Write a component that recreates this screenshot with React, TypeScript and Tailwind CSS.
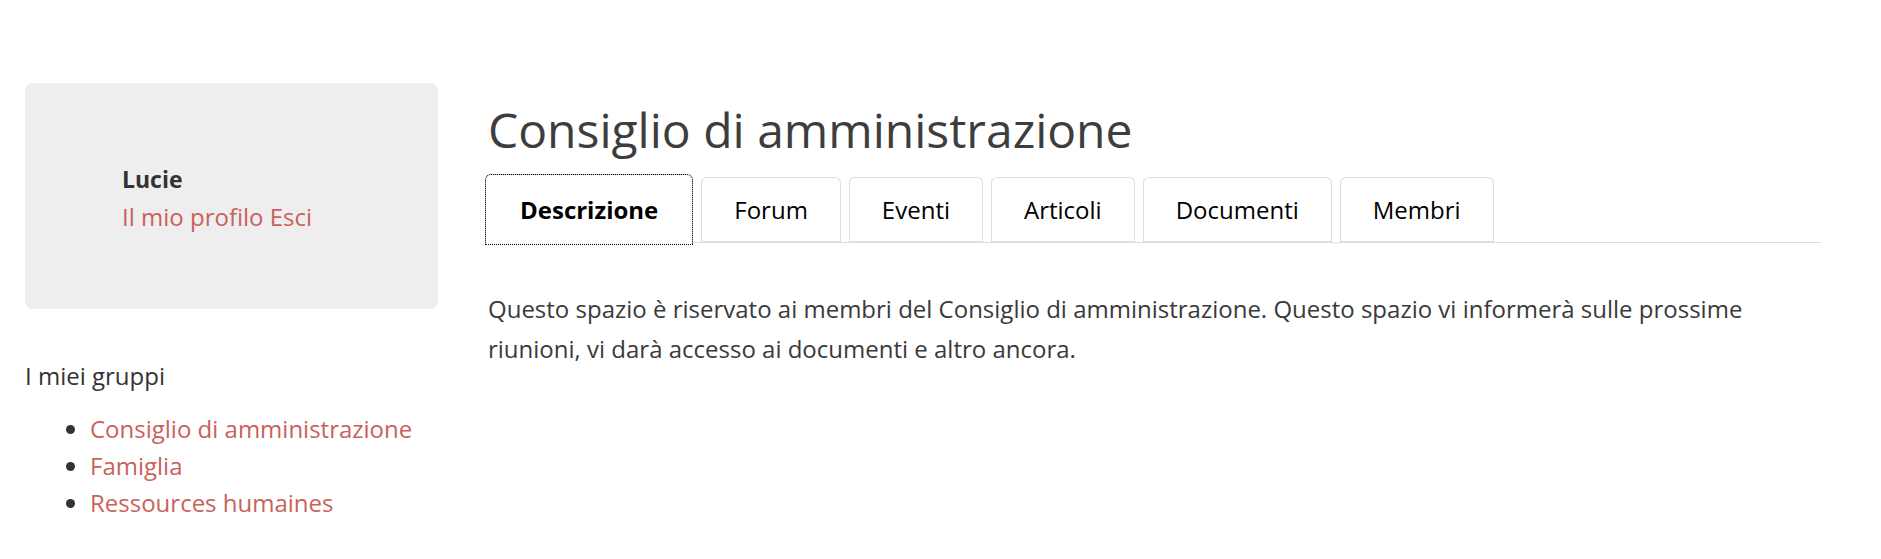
import React, { useState } from "react";

const tabs = ["Descrizione", "Forum", "Eventi", "Articoli", "Documenti", "Membri"];

const groups = [
  "Consiglio di amministrazione",
  "Famiglia",
  "Ressources humaines",
];

const App: React.FC = () => {
  const [activeTab, setActiveTab] = useState<string>("Descrizione");

  return (
    <div
      className="min-h-[559px] bg-white text-[#3a3a3a] flex pt-[83px] pl-[25px]"
      style={{ fontFamily: '"Open Sans", "Noto Sans", sans-serif' }}
    >
      {/* Sidebar */}
      <aside className="w-[413px] shrink-0">
        <div className="h-[226px] rounded-lg bg-[#eeeeee] flex flex-col justify-center pl-[97px] pt-[3px]">
          <div className="text-[23px] leading-[37px] font-bold text-[#333333]">
            Lucie
          </div>
          <div className="text-[24px] leading-[37px] text-[#c9625b]">
            <a href="#">Il mio profilo</a> <a href="#">Esci</a>
          </div>
        </div>

        <div className="mt-[48px] text-[24px] leading-[37px] text-[#333333]">
          I miei gruppi
        </div>
        <ul className="mt-[16px] list-disc pl-[65px] text-[24px] leading-[37px] marker:text-[#333333]">
          {groups.map((g) => (
            <li key={g} className="text-[#c9625b]">
              <a href="#">{g}</a>
            </li>
          ))}
        </ul>
      </aside>

      {/* Main content */}
      <main className="ml-[50px] w-[1333px]">
        <h1 className="mt-[18px] text-[48px] leading-[58px] font-normal text-[#3d3d3d]">
          Consiglio di amministrazione
        </h1>

        <ul className="mt-[15px] flex items-end gap-2 border-b border-[#dddddd]">
          {tabs.map((t) => {
            const active = t === activeTab;
            return (
              <li key={t} className={active ? "-mb-px -ml-[3px]" : "-mb-px"}>
                <button
                  onClick={() => setActiveTab(t)}
                  className={
                    active
                      ? "h-[71px] -mb-[2px] px-[34px] rounded-t-md border border-b-0 border-[#cccccc] bg-white text-[24px] font-bold text-black outline-1 outline-dotted outline-black -outline-offset-1"
                      : "h-[66px] px-[32px] rounded-t-md border border-[#dddddd] border-b-2 bg-white text-[24px] text-black"
                  }
                >
                  {t}
                </button>
              </li>
            );
          })}
        </ul>

        <p className="mt-[46px] text-[24px] leading-[40px] text-[#3a3a3a]">
          Questo spazio è riservato ai membri del Consiglio di amministrazione.
          Questo spazio vi informerà sulle prossime riunioni, vi darà accesso ai
          documenti e altro ancora.
        </p>
      </main>
    </div>
  );
};

export default App;
